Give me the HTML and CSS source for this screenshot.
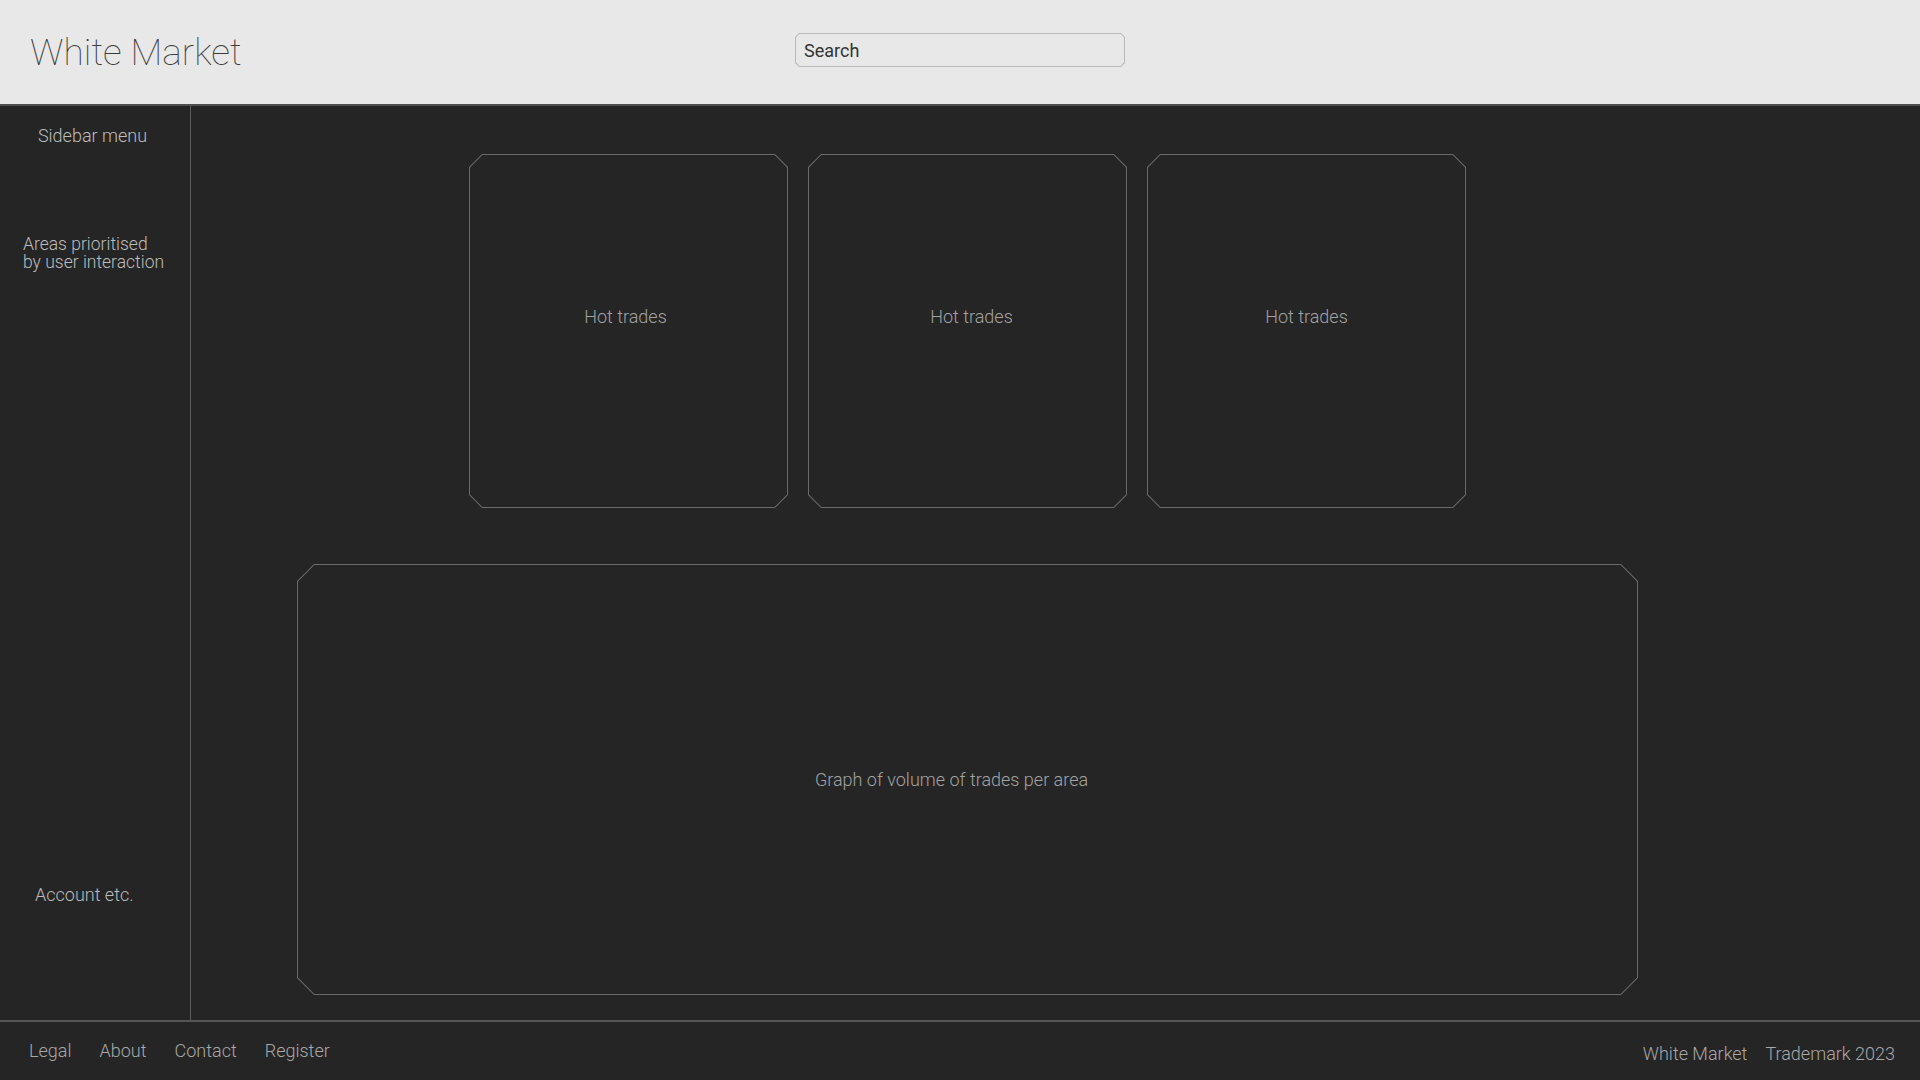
FILE: index.html
```html
<!DOCTYPE html>
<html lang="en">
<head>
<meta charset="utf-8">
<title>White Market</title>
<link rel="stylesheet" href="styles.css">
</head>
<body>
<div class="page">
  <header class="header">
    <div class="brand">White Market</div>
    <div class="search"><span>Search</span></div>
    <div></div>
  </header>
  <div class="middle">
    <aside class="sidebar">
      <div class="side-title">Sidebar menu</div>
      <div class="side-areas">Areas prioritised<br>by user interaction</div>
      <div class="side-account">Account etc.</div>
    </aside>
    <main class="main">
      <div class="content">
        <div class="cards">
          <div class="card card-a"><span class="card-label">Hot trades</span></div>
          <div class="card card-b"><span class="card-label">Hot trades</span></div>
          <div class="card"><span class="card-label">Hot trades</span></div>
        </div>
        <div class="graph"><span class="graph-label">Graph of volume of trades per area</span></div>
      </div>
    </main>
  </div>
  <footer class="footer">
    <nav class="footer-links">
      <span>Legal</span>
      <span>About</span>
      <span>Contact</span>
      <span>Register</span>
    </nav>
    <div class="footer-right">
      <span>White Market</span>
      <span>Trademark 2023</span>
    </div>
  </footer>
</div>
</body>
</html>
```

FILE: styles.css
```css
* { box-sizing: border-box; }
html, body { margin: 0; padding: 0; }
body {
  background: #252525;
  font-family: Roboto, "Liberation Sans", sans-serif;
  font-weight: 300;
}
.page {
  width: 1920px;
  height: 1080px;
  display: flex;
  flex-direction: column;
  overflow: hidden;
}
.header {
  height: 106px;
  flex: none;
  background: #e8e8e8;
  border-bottom: 2px solid #4e4e4e;
  display: grid;
  grid-template-columns: 1fr 330px 1fr;
}
.brand {
  align-self: center;
  padding-left: 30px;
  font-size: 37px;
  font-weight: 100;
  color: #3a3a3a;
}
.search {
  margin-top: 33px;
  height: 34px;
  position: relative;
  background: #b9b9b9;
  clip-path: polygon(4px 0, calc(100% - 4px) 0, 100% 4px, 100% calc(100% - 4px), calc(100% - 4px) 100%, 4px 100%, 0 calc(100% - 4px), 0 4px);
  display: flex;
  align-items: center;
  padding-left: 9px;
}
.search::before {
  content: "";
  position: absolute;
  inset: 1px;
  background: #e8e8e8;
  clip-path: polygon(3.4px 0, calc(100% - 3.4px) 0, 100% 3.4px, 100% calc(100% - 3.4px), calc(100% - 3.4px) 100%, 3.4px 100%, 0 calc(100% - 3.4px), 0 3.4px);
}
.search span {
  position: relative;
  font-size: 18px;
  font-weight: 400;
  color: #333;
}
.middle {
  flex: 1;
  display: flex;
  min-height: 0;
}
.sidebar {
  width: 191px;
  flex: none;
  border-right: 1px solid #5e5e5e;
  display: flex;
  flex-direction: column;
  color: #bdbdbd;
  font-size: 18px;
}
.side-title {
  margin-top: 19px;
  text-align: center;
  line-height: 21px;
  padding-right: 5px;
}
.side-areas {
  margin-top: 89px;
  padding-left: 23px;
  font-size: 17.5px;
  line-height: 18px;
}
.side-account {
  margin-top: auto;
  margin-bottom: 115px;
  padding-left: 35px;
  line-height: 21px;
}
.main {
  flex: 1;
  padding-top: 48px;
}
.content {
  margin-left: 106px;
  width: 1341px;
  display: flex;
  flex-direction: column;
}
.cards {
  display: flex;
  justify-content: center;
  gap: 20px;
}
.card, .graph {
  position: relative;
  background: #6a6a6a;
  display: flex;
  align-items: center;
  justify-content: center;
  color: #a3a3a3;
  font-size: 18px;
}
.card {
  width: 319px;
  height: 354px;
  padding-bottom: 30px;
  clip-path: polygon(13px 0, calc(100% - 13px) 0, 100% 13px, 100% calc(100% - 13px), calc(100% - 13px) 100%, 13px 100%, 0 calc(100% - 13px), 0 13px);
}
.card-a { padding-right: 6px; }
.card-b { padding-left: 8px; }
.card::before {
  content: "";
  position: absolute;
  inset: 1px;
  background: #252525;
  clip-path: polygon(12.4px 0, calc(100% - 12.4px) 0, 100% 12.4px, 100% calc(100% - 12.4px), calc(100% - 12.4px) 100%, 12.4px 100%, 0 calc(100% - 12.4px), 0 12.4px);
}
.graph {
  margin-top: 56px;
  height: 431px;
  padding-right: 32px;
  clip-path: polygon(17px 0, calc(100% - 17px) 0, 100% 17px, 100% calc(100% - 17px), calc(100% - 17px) 100%, 17px 100%, 0 calc(100% - 17px), 0 17px);
}
.graph::before {
  content: "";
  position: absolute;
  inset: 1px;
  background: #252525;
  clip-path: polygon(16.4px 0, calc(100% - 16.4px) 0, 100% 16.4px, 100% calc(100% - 16.4px), calc(100% - 16.4px) 100%, 16.4px 100%, 0 calc(100% - 16.4px), 0 16.4px);
}
.card-label, .graph-label { position: relative; }
.footer {
  height: 60px;
  flex: none;
  border-top: 2px solid #555;
  display: flex;
  justify-content: space-between;
  align-items: center;
  color: #a8a8a8;
  font-size: 18px;
  padding: 0 25px 0 29px;
}
.footer-links {
  display: flex;
  gap: 28px;
  margin-top: -2px;
}
.footer-right {
  display: flex;
  gap: 18px;
  margin-top: 4px;
}
```
